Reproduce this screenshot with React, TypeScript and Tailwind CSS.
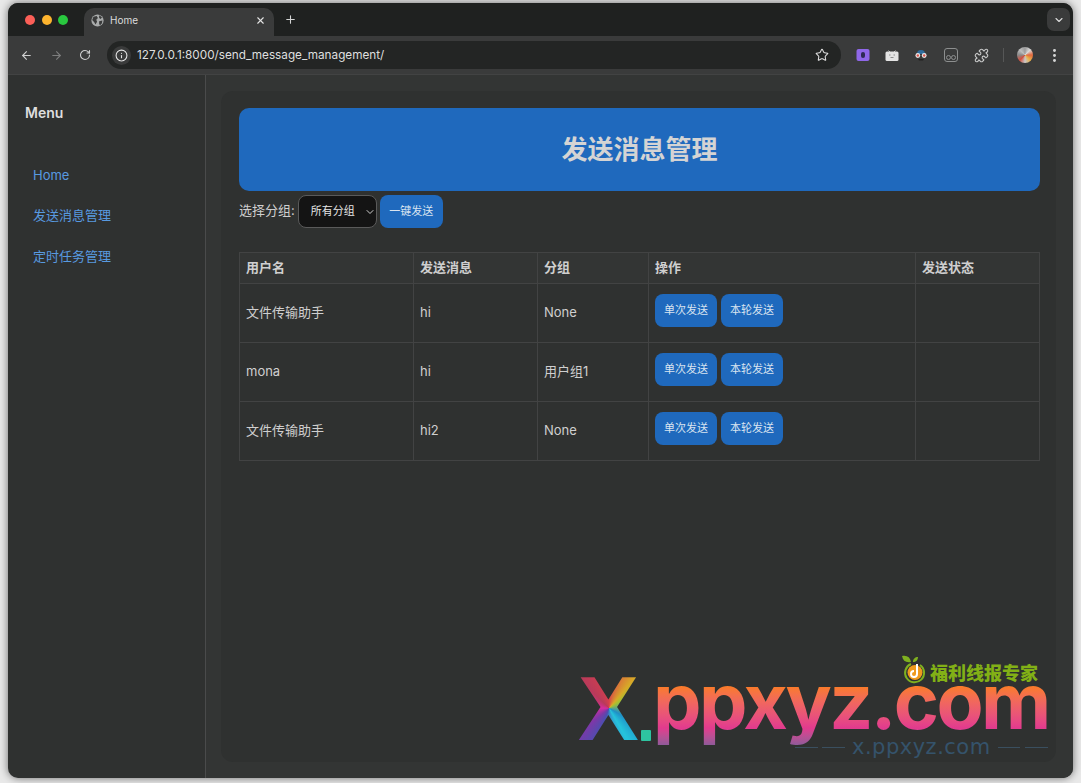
import { ArrowLeft, ArrowRight, RotateCw, Info, Star, X, Plus, ChevronDown, Puzzle, EllipsisVertical } from 'lucide-react'

const rows = [
  { name: '文件传输助手', msg: 'hi', group: 'None' },
  { name: 'mona', msg: 'hi', group: '用户组1' },
  { name: '文件传输助手', msg: 'hi2', group: 'None' },
]

const sans = 'font-["Inter","Noto_Sans_CJK_SC",sans-serif]'

function GlobeFavicon() {
  return (
    <svg viewBox="0 0 16 16" className="h-[13px] w-[13px]">
      <circle cx="8" cy="8" r="7.5" fill="#a9abab" />
      <path d="M3 3.5 7 2.5 8.5 5 6.5 7 7.5 9.5 5.5 13 4 10 1.5 7.5ZM10 1.5 13.5 4 12 6 10 5ZM10 9 14 8 13.5 11.5 11 14 10 12Z" fill="#3a3b3b" />
    </svg>
  )
}

function ToolbarExtensions() {
  return (
    <div className="flex items-center">
      <svg viewBox="0 0 14 14" className="ml-[15px] h-[14px] w-[14px]">
        <rect x="0.5" y="1" width="13" height="12" rx="2" fill="#8f67e8" />
        <rect x="5" y="4" width="4" height="6" rx="2" fill="#2e2a55" />
      </svg>
      <svg viewBox="0 0 14 14" className="ml-[15px] h-[14px] w-[14px]">
        <path d="M3.5 2.5 5 4M10.5 2.5 9 4" stroke="#ddd" strokeWidth="0.8" />
        <rect x="0.5" y="3.5" width="13" height="9.5" rx="1.5" fill="#e4e4e4" />
        <path d="M4 7h1.5M8.5 7H10M5.5 9.5h3" stroke="#777" strokeWidth="0.8" />
      </svg>
      <svg viewBox="0 0 14 14" className="ml-[15px] h-[14px] w-[14px]">
        <path d="M3 6a4 4 0 0 1 8 0Z" fill="#2f6c9e" />
        <circle cx="3.8" cy="7.5" r="2.4" fill="#e9e9e9" />
        <circle cx="10.2" cy="7.5" r="2.4" fill="#e9e9e9" />
        <circle cx="3.8" cy="7.5" r="1.2" fill="#d9534a" />
        <circle cx="10.2" cy="7.5" r="1.2" fill="#d9534a" />
        <path d="M4 11h6l-1 1.5H5Z" fill="#222" />
      </svg>
      <svg viewBox="0 0 14 14" className="ml-[16px] h-[14px] w-[14px]" fill="none" stroke="#8d8f8f">
        <rect x="0.5" y="0.5" width="13" height="13" rx="2.5" />
        <circle cx="4.5" cy="9.5" r="2" />
        <circle cx="9.5" cy="9.5" r="2" />
      </svg>
      <Puzzle className="ml-[16px] h-[15px] w-[15px] text-[#c7c8c8]" strokeWidth={1.8} />
      <span className="ml-[14px] h-[14px] w-px bg-[#565757]" />
      <span className="ml-[13px] h-4 w-4 rounded-full bg-[conic-gradient(#9a9a9a,#d9d9d9,#e2673c,#e8b04a,#c9c9c9,#d2503f,#8a8a8a,#bdbdbd,#9a9a9a)]" />
      <EllipsisVertical className="ml-[13px] h-[17px] w-[17px] text-[#d4d5d5]" strokeWidth={2.2} />
    </div>
  )
}

function ChromeBar() {
  return (
    <>
      <div className="flex h-[33px] items-end bg-[#1f2120] pl-[17px] pr-[3px]">
        <div className="flex h-full items-center gap-[6.5px] pr-[16px]">
          <span className="h-[10px] w-[10px] rounded-full bg-[#fb5f57]" />
          <span className="h-[10px] w-[10px] rounded-full bg-[#fdb42e]" />
          <span className="h-[10px] w-[10px] rounded-full bg-[#29c83f]" />
        </div>
        <div className="flex h-[28px] w-[190px] items-center rounded-t-[10px] bg-[#3a3b3b] pb-[4px] pl-[7px] pr-[8px] text-[10px] text-[#dcdcdc]">
          <GlobeFavicon />
          <span className="ml-[6px] flex-1">Home</span>
          <X className="h-[11px] w-[11px] text-[#e2e2e2]" strokeWidth={2.4} />
        </div>
        <div className="flex h-full items-center pl-[10px]">
          <Plus className="h-[13px] w-[13px] text-[#d4d5d5]" strokeWidth={2} />
        </div>
        <div className="flex h-full flex-1 items-center justify-end">
          <div className="flex h-[23px] w-[23px] items-center justify-center rounded-[7px] bg-[#3a3b3b]">
            <ChevronDown className="h-[12px] w-[12px] text-[#dcdcdc]" strokeWidth={2.2} />
          </div>
        </div>
      </div>
      <div className="flex h-[39px] items-center border-b border-[#424343] bg-[#3a3b3b] pl-[12px] pr-[10px]">
        <ArrowLeft className="h-[13px] w-[13px] text-[#cfd0d0]" strokeWidth={2} />
        <ArrowRight className="ml-[17px] h-[13px] w-[13px] text-[#7d7e7e]" strokeWidth={2} />
        <RotateCw className="ml-[16px] h-[12px] w-[12px] text-[#cfd0d0]" strokeWidth={2.2} />
        <div className="ml-[16px] flex h-[28px] w-[734px] shrink-0 items-center rounded-full bg-[#232524] pl-[5px] pr-[12px]">
          <span className="flex h-[19px] w-[19px] items-center justify-center rounded-full bg-[#3a3b3b]">
            <Info className="h-[13px] w-[13px] text-[#e4e4e4]" strokeWidth={2} />
          </span>
          <span className="ml-[6px] flex-1 pt-[1px] text-[11.75px] text-[#dedfdf]">127.0.0.1:8000/send_message_management/</span>
          <Star className="h-[14px] w-[14px] text-[#dcdcdc]" strokeWidth={1.8} />
        </div>
        <ToolbarExtensions />
      </div>
    </>
  )
}

function Sidebar() {
  return (
    <aside className="w-[198px] shrink-0 border-r border-[#4a4b4b] pl-[17px]">
      <h2 className="mt-[28px] text-[14px] leading-[20px] font-semibold text-[#dedede]">Menu</h2>
      <nav className="mt-[41.7px] flex flex-col gap-[20px] pl-[8px] text-[13px] leading-[20.5px] text-[#589ae0]">
        <a>Home</a>
        <a>发送消息管理</a>
        <a>定时任务管理</a>
      </nav>
    </aside>
  )
}

function MessageTable() {
  return (
    <table className="mt-[24px] w-full table-fixed border-collapse border border-[#424343] text-[13px] text-[#cfcfcf]">
      <thead>
        <tr className="h-[31px] bg-[#333534] text-left">
          {[
            ['用户名', 'w-[174px]'],
            ['发送消息', 'w-[124px]'],
            ['分组', 'w-[111px]'],
            ['操作', 'w-[267px]'],
            ['发送状态', ''],
          ].map(([h, w]) => (
            <th key={h} className={`border border-[#424343] px-[6px] font-semibold ${w}`}>{h}</th>
          ))}
        </tr>
      </thead>
      <tbody>
        {rows.map((r, i) => (
          <tr key={i} className="h-[59px]">
            <td className="border border-[#424343] px-[6px]">{r.name}</td>
            <td className="border border-[#424343] px-[6px]">{r.msg}</td>
            <td className="border border-[#424343] px-[6px]">{r.group}</td>
            <td className="border border-[#424343] px-[6px]">
              <div className="-mt-[6px] flex gap-[4px]">
                <button className="h-[33px] w-[62px] rounded-[8px] bg-[#1f69bd] text-[11px] text-[#d9e4f0]">单次发送</button>
                <button className="h-[33px] w-[62px] rounded-[8px] bg-[#1f69bd] text-[11px] text-[#d9e4f0]">本轮发送</button>
              </div>
            </td>
            <td className="border border-[#424343] px-[6px]"></td>
          </tr>
        ))}
      </tbody>
    </table>
  )
}

function Watermark() {
  return (
    <div className="pointer-events-none absolute left-[572px] top-[652px] h-[120px] w-[490px]">
      <div className="absolute left-[329px] top-[2px] flex items-center">
        <svg viewBox="0 0 30 30" className="h-[30px] w-[30px]">
          <path d="M1 2c5-1 8 1 9 6-5 1-8-1-9-6ZM12 8c0-3 2-5 5-5 0 3-2 5-5 5Z" fill="#7fb01f" />
          <path d="M10 10a9.5 9.5 0 1 0 9 1" fill="none" stroke="#7fb01f" strokeWidth="2" />
          <circle cx="14" cy="18.5" r="7.5" fill="#ef9a1e" />
          <path d="M16 10v10a3 3 0 1 1-3-3" fill="none" stroke="#fff" strokeWidth="2" />
        </svg>
        <span className="-ml-[1px] mt-[5px] text-[18px] leading-none font-black text-[#82b016] [font-family:'Noto_Sans_CJK_SC',sans-serif]">福利线报专家</span>
      </div>
      <span className="absolute left-[6px] top-[17px] bg-[conic-gradient(from_0deg_at_51%_49%,#d9404a_0deg,#d8a828_40deg,#a8c030_55deg,#1e90c8_120deg,#25c4dc_150deg,#4a4fb0_200deg,#7c38a8_230deg,#d92ca0_270deg,#b83a5a_315deg,#d9404a_360deg)] bg-clip-text text-[91px] leading-[80px] font-bold text-transparent [font-family:'Liberation_Sans',sans-serif]">X</span>
      <span className="absolute left-[69px] top-[78px] h-[11px] w-[10px] rounded-[1px] bg-[#2ec4a0]" />
      <span className="absolute left-[81px] top-[4px] bg-linear-to-b from-[#f97a2c] from-35% via-[#e23a8e] via-80% to-[#8b5a9a] bg-clip-text text-[77px] leading-[90px] font-bold tracking-[-2.6px] whitespace-nowrap text-transparent [font-family:'Inter',sans-serif]">ppxyz.com</span>
      <div className="absolute left-[223px] top-[83px] flex items-center">
        <span className="h-px w-[23px] bg-[#3a4f5f]" />
        <span className="ml-[4px] h-px w-[23px] bg-[#3a4f5f]" />
        <span className="mx-[7px] text-[21px] leading-[24px] font-medium tracking-[0.5px] text-[#35536b] [font-family:'DejaVu_Sans',sans-serif]">x.ppxyz.com</span>
        <span className="h-px w-[22px] bg-[#3a4f5f]" />
        <span className="ml-[5px] h-px w-[23px] bg-[#3a4f5f]" />
      </div>
    </div>
  )
}

export default function App() {
  return (
    <div className={`relative h-[783px] w-[1081px] overflow-hidden bg-[#e9e9e9] pl-[8px] pt-[3px] ${sans}`}>
      <div className="flex h-[775px] w-[1065px] flex-col overflow-hidden rounded-[10px] bg-[#2f3130] shadow-[0_0_8px_rgba(0,0,0,0.55)]">
        <ChromeBar />
        <div className="flex flex-1">
          <Sidebar />
          <main className="flex-1 bg-[#333534] pb-[16px] pl-[15px] pr-[17px] pt-[16px]">
            <div className="h-full rounded-[12px] bg-[#2f3130] pl-[18px] pr-[16px] pt-[17px]">
              <div className="flex h-[83px] items-center justify-center rounded-[10px] bg-[#1f69bd]">
                <h1 className="text-[26px] font-bold text-[#d4d4d4]">发送消息管理</h1>
              </div>
              <div className="mt-[3px] flex h-[34px] items-center text-[13px] text-[#cfcfcf]">
                <label>选择分组:</label>
                <span className="relative ml-[3px] flex">
                  <select className="h-[33px] w-[79px] appearance-none rounded-[8px] border border-[#5a5a5a] bg-[#141414] pl-[12px] text-[11px] text-[#e6e6e6]">
                    <option>所有分组</option>
                  </select>
                  <ChevronDown className="pointer-events-none absolute right-[1px] top-[11px] h-[12px] w-[12px] text-[#cfcfcf]" strokeWidth={2} />
                </span>
                <button className="ml-[3px] h-[33px] w-[63px] rounded-[8px] bg-[#1f69bd] text-[11px] text-[#d9e4f0]">一键发送</button>
              </div>
              <MessageTable />
            </div>
          </main>
        </div>
      </div>
      <Watermark />
    </div>
  )
}
